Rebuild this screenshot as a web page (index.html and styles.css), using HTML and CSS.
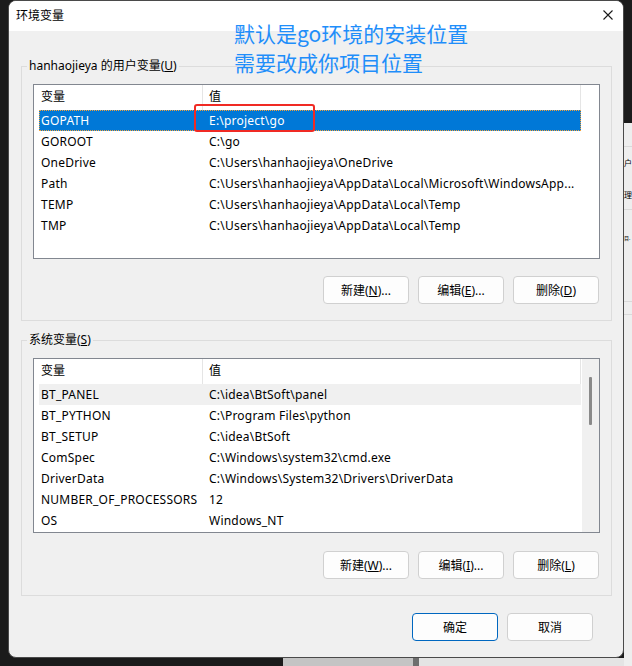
FILE: index.html
```html
<!DOCTYPE html>
<html lang="zh-CN">
<head>
<meta charset="utf-8">
<title>环境变量</title>
<link rel="stylesheet" href="styles.css">
</head>
<body>
<div class="desk">
  <div class="gap-left"></div>
  <div class="center-col">
    <div class="dialog">
      <div class="titlebar">
        <span class="title">环境变量</span>
        <svg class="close" width="10" height="10" viewBox="0 0 10 10"><path d="M0.5 0.5L9.5 9.5M9.5 0.5L0.5 9.5" stroke="#1a1a1a" stroke-width="1.1" fill="none"/></svg>
      </div>

      <fieldset class="group">
        <legend>hanhaojieya 的用户变量(<u>U</u>)</legend>
        <div class="list">
          <div class="list-main">
            <div class="lhead"><div class="hc c1">变量</div><div class="hc c2">值</div></div>
            <div class="row selected"><div class="c1">GOPATH</div><div class="c2">E:\project\go</div></div>
            <div class="row"><div class="c1">GOROOT</div><div class="c2">C:\go</div></div>
            <div class="row"><div class="c1">OneDrive</div><div class="c2">C:\Users\hanhaojieya\OneDrive</div></div>
            <div class="row"><div class="c1">Path</div><div class="c2">C:\Users\hanhaojieya\AppData\Local\Microsoft\WindowsApp...</div></div>
            <div class="row"><div class="c1">TEMP</div><div class="c2">C:\Users\hanhaojieya\AppData\Local\Temp</div></div>
            <div class="row"><div class="c1">TMP</div><div class="c2">C:\Users\hanhaojieya\AppData\Local\Temp</div></div>
          </div>
        </div>
        <div class="btnrow">
          <button class="btn">新建(<u>N</u>)...</button>
          <button class="btn">编辑(<u>E</u>)...</button>
          <button class="btn">删除(<u>D</u>)</button>
        </div>
      </fieldset>

      <fieldset class="group group2">
        <legend>系统变量(<u>S</u>)</legend>
        <div class="list">
          <div class="list-main">
            <div class="lhead"><div class="hc c1">变量</div><div class="hc c2">值</div></div>
            <div class="row hover"><div class="c1">BT_PANEL</div><div class="c2">C:\idea\BtSoft\panel</div></div>
            <div class="row"><div class="c1">BT_PYTHON</div><div class="c2">C:\Program Files\python</div></div>
            <div class="row"><div class="c1">BT_SETUP</div><div class="c2">C:\idea\BtSoft</div></div>
            <div class="row"><div class="c1">ComSpec</div><div class="c2">C:\Windows\system32\cmd.exe</div></div>
            <div class="row"><div class="c1">DriverData</div><div class="c2">C:\Windows\System32\Drivers\DriverData</div></div>
            <div class="row"><div class="c1">NUMBER_OF_PROCESSORS</div><div class="c2">12</div></div>
            <div class="row"><div class="c1">OS</div><div class="c2">Windows_NT</div></div>
          </div>
          <div class="vscroll"><div class="thumb"></div></div>
        </div>
        <div class="btnrow btnrow2">
          <button class="btn">新建(<u>W</u>)...</button>
          <button class="btn">编辑(<u>I</u>)...</button>
          <button class="btn">删除(<u>L</u>)</button>
        </div>
      </fieldset>

      <div class="footer">
        <button class="btn primary">确定</button>
        <button class="btn">取消</button>
      </div>

      <div class="note">默认是go环境的安装位置<br>需要改成你项目位置</div>
      <div class="redbox"></div>
    </div>
    <div class="bottom-strip">
      <div class="bs-dark"></div>
      <div class="bs-grey"></div>
      <div class="bs-line"></div>
      <div class="bs-light"></div>
    </div>
  </div>
  <div class="right-col">
    <div class="rc-dark"></div>
    <div class="rc-light">
      <div class="rc-line l1"></div>
      <div class="rc-text t1">户</div>
      <div class="rc-text t2">理</div>
      <div class="rc-line l2"></div>
      <div class="rc-text t3">目.</div>
      <div class="rc-line l3"></div>
      <div class="rc-line l4"></div>
    </div>
  </div>
</div>
</body>
</html>
```

FILE: styles.css
```css
* { box-sizing: border-box; }
html, body { margin: 0; padding: 0; }
body {
  width: 632px;
  height: 666px;
  overflow: hidden;
  background: #1b1b1b;
  font-family: "Noto Sans", "Noto Sans CJK SC", sans-serif;
  font-size: 12px;
  color: #000;
}
.desk { display: flex; width: 632px; height: 666px; }
.gap-left { width: 8px; background: #1b1b1b; }
.center-col { width: 616px; display: flex; flex-direction: column; }

.dialog {
  position: relative;
  width: 616px;
  height: 658px;
  background: #f0f0f0;
  border: 1px solid #4a4a4a;
  border-radius: 8px;
  overflow: hidden;
}
.titlebar {
  height: 30px;
  background: #fff;
  display: flex;
  align-items: center;
  justify-content: space-between;
  padding: 0 10px 3px 7px;
}
.title { font-family: "Noto Sans CJK SC", sans-serif; font-size: 12px; color: #000; }
.close { display: block; margin-top: 1px; }

.group {
  margin: 27px 11px 0 12px;
  padding: 10px 11px 16px 11px;
  border: 1px solid #dcdcdc;
  min-width: 0;
}
.group2 { margin-top: 11px; }
.group legend {
  margin-left: -6px;
  padding: 0 2px;
  line-height: 16px;
  font-size: 12px;
  color: #000;
}

.list {
  height: 175px;
  border: 1px solid #828790;
  background: #fff;
  display: flex;
}
.list-main { flex: 1; padding-left: 5px; }
.lhead, .row {
  display: grid;
  grid-template-columns: 164px 378px;
  width: 542px;
}
.lhead { height: 25px; }
.hc { line-height: 24px; border-right: 1px solid #e5e5e5; }
.row { height: 21px; line-height: 21px; white-space: nowrap; letter-spacing: 0.22px; }
.c1 { padding-left: 2px; overflow: hidden; }
.c2 { padding-left: 6px; overflow: hidden; }
.row.selected {
  background: #0078d7;
  color: #fff;
  outline: 1px dotted #f4a23a;
  outline-offset: -1px;
}
.row.hover { background: #f0f0f0; }

.vscroll {
  width: 17px;
  background: #f0f0f0;
  display: flex;
  justify-content: center;
  padding-top: 18px;
}
.thumb { width: 3px; height: 48px; background: #8a8a8a; border-radius: 1px; }

.btnrow {
  display: flex;
  justify-content: flex-end;
  gap: 9px;
  margin-top: 17px;
  padding-right: 1px;
}
.btnrow2 { margin-top: 18px; }
.btn {
  width: 86px;
  height: 28px;
  border: 1px solid #d0d0d0;
  border-radius: 4px;
  background: #fdfdfd;
  font-family: "Noto Sans", "Noto Sans CJK SC", sans-serif;
  font-size: 12px;
  color: #000;
  padding: 0;
}
.btn.primary { border-color: #0067c0; }
.footer {
  display: flex;
  justify-content: flex-end;
  gap: 9px;
  margin-top: 17px;
  padding-right: 30px;
}

.note {
  position: absolute;
  left: 225px;
  top: 18px;
  font-family: "Noto Sans CJK SC", sans-serif;
  font-size: 21px;
  line-height: 29px;
  color: #1f8efa;
  white-space: nowrap;
}
.redbox {
  position: absolute;
  left: 185px;
  top: 103px;
  width: 121px;
  height: 28px;
  border: 2px solid #f02a24;
  border-radius: 3px;
}

.bottom-strip { height: 8px; display: flex; }
.bs-dark { width: 275px; background: #1b1b1b; }
.bs-grey { width: 130px; background: #c4c4c4; }
.bs-line { width: 6px; background: #6e6e6e; }
.bs-light { flex: 1; background: #e4e4e4; }

.right-col { width: 8px; display: flex; flex-direction: column; overflow: hidden; }
.rc-dark { height: 123px; background: #1b1b1b; }
.rc-light { flex: 1; background: #eeeeee; overflow: hidden; font-family: "Noto Sans CJK SC", sans-serif; font-size: 8px; line-height: 16px; }
.rc-line { height: 1px; background: #d9d9d9; }
.l1 { margin-top: 23px; }
.rc-text { white-space: nowrap; }
.t3 { font-size: 5px; }
.t1 { margin-top: 8px; }
.t2 { margin-top: 16px; }
.l2 { margin-top: 6px; }
.t3 { margin-top: 20px; }
.l3 { margin-top: 55px; }
.l4 { margin-top: 12px; }
```
